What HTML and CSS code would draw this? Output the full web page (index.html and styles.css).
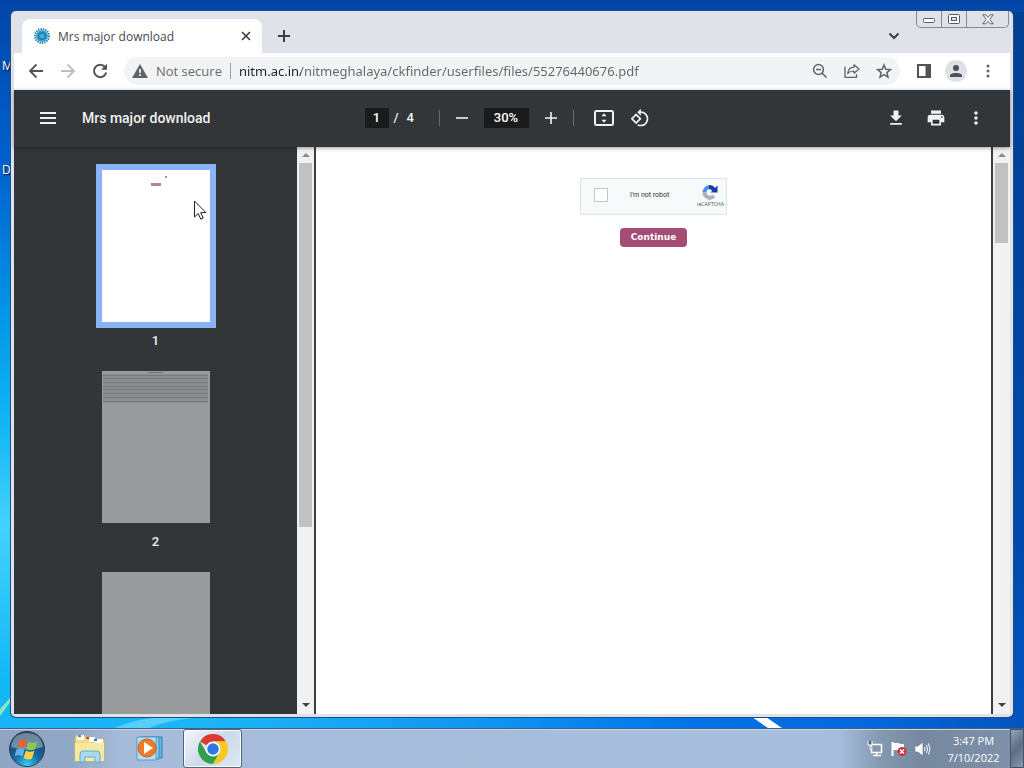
FILE: index.html
```
<!DOCTYPE html>
<html lang="en">
<head>
  <meta charset="UTF-8">
  <title>Mrs major download</title>
  <link rel="stylesheet" href="styles.css">
</head>
<body>

<main class="desktop">
  <svg class="wallpaper" viewBox="0 0 1024 728" preserveAspectRatio="none" aria-hidden="true">
    <path d="M0 709 L11 697 L11 701 L0 716Z" fill="#8be6c0"/>
    <path d="M115 728 Q135 719 160 717 L205 717 Q165 720 150 728Z" fill="#56cffb"/>
    <path d="M752 717 L766 717 L782 728 L768 728Z" fill="#fff"/>
  </svg>
  <span class="shortcut shortcut-m">M</span>
  <span class="shortcut shortcut-d">D</span>

  <div class="window">
    <header class="tabstrip">
      <div class="tab">
        <svg width="18" height="18" viewBox="0 0 18 18">
          <circle cx="9" cy="9" r="7" fill="none" stroke="#2b7fa3" stroke-width="2" stroke-dasharray="1.4 1"/>
          <circle cx="9" cy="9" r="6" fill="#35a3d5"/>
          <circle cx="9" cy="9" r="3.5" fill="#299bd0" stroke="#1c7298"/>
          <path d="M7 9h4M9 7v4" stroke="#5dbbe0"/>
        </svg>
        <span class="tab-title">Mrs major download</span>
        <button class="plain" aria-label="Close tab">
          <svg width="10" height="10" viewBox="0 0 10 10"><path d="M1 1l8 8M9 1l-8 8" stroke="#3c4043" stroke-width="1.7"/></svg>
        </button>
      </div>
      <button class="plain new-tab" aria-label="New tab">
        <svg width="12" height="12" viewBox="0 0 12 12"><path d="M6 0v12M0 6h12" stroke="#3c4043" stroke-width="2"/></svg>
      </button>
      <button class="plain tab-search" aria-label="Search tabs">
        <svg width="12" height="8" viewBox="0 0 12 8"><path d="M1.500 1.500L6 6l4.500-4.500" fill="none" stroke="#3c4043" stroke-width="2"/></svg>
      </button>
      <div class="caption">
        <button class="cap-btn" aria-label="Minimize">
          <svg width="13" height="6" viewBox="0 0 13 6"><rect x=".5" y=".5" width="11" height="4" rx="1" fill="#fff" stroke="#555b66"/></svg>
        </button>
        <button class="cap-btn" aria-label="Maximize">
          <svg width="12" height="10" viewBox="0 0 12 10"><rect x=".5" y=".5" width="11" height="9" rx="1" fill="#fff" stroke="#555b66"/><rect x="3.500" y="3.500" width="5" height="3" fill="#dfe2e9" stroke="#555b66"/></svg>
        </button>
        <button class="cap-btn cap-close" aria-label="Close">
          <svg width="12" height="11" viewBox="0 0 12 11"><path d="M.8.800h3L6 3.400 8.200.800h3L7.700 5.300l3.500 4.500h-3L6 7.200 3.800 9.800h-3l3.500-4.500z" fill="#fff" stroke="#555b66"/></svg>
        </button>
      </div>
    </header>

    <nav class="toolbar">
      <button class="plain nav-btn" aria-label="Back">
        <svg width="16" height="16" viewBox="0 0 16 16"><path d="M15 8H2M8.500 1.500L2 8l6.500 6.500" fill="none" stroke="#505458" stroke-width="1.800"/></svg>
      </button>
      <button class="plain nav-btn" aria-label="Forward">
        <svg width="16" height="16" viewBox="0 0 16 16"><path d="M1 8h13M7.500 1.500L14 8l-6.500 6.500" fill="none" stroke="#bcbec1" stroke-width="1.800"/></svg>
      </button>
      <button class="plain nav-btn" aria-label="Reload">
        <svg width="16" height="16" viewBox="0 0 16 16"><path d="M13 4A6.200 6.200 0 1 0 14.200 9.500" fill="none" stroke="#505458" stroke-width="2"/><path d="M15 .8v6H9z" fill="#505458"/></svg>
      </button>
      <div class="omnibox">
        <svg width="16" height="14" viewBox="0 0 16 14"><path d="M8 0l8 14H0z" fill="#5f6368"/><path d="M8 5v4M8 10.300v1.700" stroke="#f1f3f4" stroke-width="1.800"/></svg>
        <label class="not-secure" for="url">Not secure</label>
        <input id="url" type="text" value="nitm.ac.in/nitmeghalaya/ckfinder/userfiles/files/55276440676.pdf">
        <button class="plain" aria-label="Zoom">
          <svg width="16" height="16" viewBox="0 0 16 16"><circle cx="6.500" cy="6.500" r="4.900" fill="none" stroke="#5f6368" stroke-width="1.500"/><path d="M4 6.500h5M10 10l4.500 4.500" stroke="#5f6368" stroke-width="1.600"/></svg>
        </button>
        <button class="plain" aria-label="Share">
          <svg width="16" height="16" viewBox="0 0 16 16"><path d="M1 3.500v10.800h11.500v-3" fill="none" stroke="#5f6368" stroke-width="1.300"/><path d="M10 1.800l5 4.200-5 4.200V8Q6 7.800 3.600 10.500 4.500 4.500 10 4.200z" fill="none" stroke="#5f6368" stroke-width="1.200" stroke-linejoin="round"/></svg>
        </button>
        <button class="plain" aria-label="Bookmark">
          <svg width="16" height="16" viewBox="0 0 16 16"><path d="M8 2l1.800 4.200 4.600.400-3.500 3 1.100 4.500L8 11.700l-4 2.400 1.100-4.500-3.500-3 4.600-.4z" fill="none" stroke="#5f6368" stroke-width="1.500"/></svg>
        </button>
      </div>
      <button class="plain" aria-label="Side panel">
        <svg width="16" height="16" viewBox="0 0 16 16"><path d="M2 2h12v12H2z" fill="none" stroke="#505458" stroke-width="2"/><path d="M9.500 2H14v12H9.500z" fill="#505458"/></svg>
      </button>
      <button class="plain avatar" aria-label="Profile">
        <svg width="12" height="12" viewBox="0 0 12 12"><circle cx="6" cy="3" r="3" fill="#4a4f59"/><path d="M0 12v-1.500C0 7 12 7 12 10.500V12z" fill="#4a4f59"/></svg>
      </button>
      <button class="plain" aria-label="Menu">
        <svg width="16" height="16" viewBox="0 0 16 16" fill="#5f6368"><circle cx="8" cy="3" r="1.500"/><circle cx="8" cy="8" r="1.500"/><circle cx="8" cy="13" r="1.500"/></svg>
      </button>
    </nav>

    <section class="pdfbar">
      <div class="pdf-left">
        <button class="plain" aria-label="Toggle sidebar">
          <svg width="16" height="12" viewBox="0 0 16 12"><path d="M0 1h16M0 6h16M0 11h16" stroke="#f1f1f1" stroke-width="2"/></svg>
        </button>
        <h1>Mrs major download</h1>
      </div>
      <div class="pdf-center">
        <input class="box page-box" type="text" value="1" aria-label="Page">
        <span class="pages"><span>/</span><span>4</span></span>
        <i class="divider"></i>
        <button class="plain" aria-label="Zoom out">
          <svg width="12" height="12" viewBox="0 0 12 12"><path d="M0 6h12" stroke="#f1f1f1" stroke-width="1.600"/></svg>
        </button>
        <input class="box zoom-box" type="text" value="30%" aria-label="Zoom level">
        <button class="plain" aria-label="Zoom in">
          <svg width="12" height="12" viewBox="0 0 12 12"><path d="M0 6h12M6 0v12" stroke="#f1f1f1" stroke-width="1.600"/></svg>
        </button>
        <i class="divider"></i>
        <button class="plain fit" aria-label="Fit to page">
          <svg width="20" height="16" viewBox="0 0 20 16"><rect x="1" y="1" width="18" height="14" rx="1.500" fill="none" stroke="#f1f1f1" stroke-width="2"/><path d="M10 3.300l2.500 2.900h-5zM10 12.700l2.500-2.900h-5z" fill="#f1f1f1"/></svg>
        </button>
        <button class="plain" aria-label="Rotate">
          <svg width="20" height="20" viewBox="0 0 24 24"><path d="M7.340 6.410L.86 12.900l6.490 6.480 6.490-6.480-6.500-6.490zM3.690 12.900l3.660-3.660L11 12.900l-3.660 3.660-3.650-3.660zm15.670-6.260C17.610 4.880 15.300 4 13 4V.76L8.760 5 13 9.240V6c1.790 0 3.580.68 4.950 2.050 2.730 2.730 2.730 7.170 0 9.900C16.580 19.320 14.790 20 13 20c-.97 0-1.940-.21-2.840-.61l-1.490 1.490C10.020 21.620 11.510 22 13 22c2.300 0 4.610-.88 6.360-2.640 3.520-3.510 3.520-9.210 0-12.720z" fill="#f1f1f1"/></svg>
        </button>
      </div>
      <div class="pdf-right">
        <button class="plain" aria-label="Download">
          <svg width="20" height="20" viewBox="0 0 24 24"><path d="M19 9h-4V3H9v6H5l7 7 7-7zM5 18v2h14v-2H5z" fill="#f1f1f1"/></svg>
        </button>
        <button class="plain" aria-label="Print">
          <svg width="20" height="20" viewBox="0 0 24 24"><path d="M19 8H5c-1.660 0-3 1.340-3 3v6h4v4h12v-4h4v-6c0-1.660-1.340-3-3-3zm-3 11H8v-5h8v5zm3-7c-.55 0-1-.45-1-1s.45-1 1-1 1 .45 1 1-.45 1-1 1zm-1-9H6v4h12V3z" fill="#f1f1f1"/></svg>
        </button>
        <button class="plain" aria-label="More actions">
          <svg width="20" height="20" viewBox="0 0 24 24"><path d="M12 8c1.100 0 2-.9 2-2s-.9-2-2-2-2 .9-2 2 .9 2 2 2zm0 2c-1.100 0-2 .9-2 2s.9 2 2 2 2-.9 2-2-.9-2-2-2zm0 6c-1.100 0-2 .9-2 2s.9 2 2 2 2-.9 2-2-.9-2-2-2z" fill="#f1f1f1"/></svg>
        </button>
      </div>
    </section>

    <div class="viewer">
      <aside class="sidebar">
        <div class="thumb active">
          <div class="sheet">
            <svg width="108" height="30" viewBox="0 0 108 30"><path d="M49 8h12" stroke="#eef1f1"/><path d="M63 7h2" stroke="#999" stroke-width="2"/><rect x="49" y="13" width="10" height="3" fill="#b98099"/></svg>
          </div>
          <span>1</span>
        </div>
        <div class="thumb">
          <div class="sheet">
            <svg width="108" height="34" viewBox="0 0 108 34"><rect x="1" y="3" width="105" height="29" fill="#8b8d8e"/><path d="M46 1.500h15" stroke="#6e7071"/><path d="M1 4.500h105M1 7.500h105M1 11.500h105M1 15.500h105M1 18.500h105M1 22.500h105M1 26.500h105M1 30.500h105" stroke="#77797a"/></svg>
          </div>
          <span>2</span>
        </div>
        <div class="thumb">
          <div class="sheet"></div>
        </div>
      </aside>
      <div class="scrollbar">
        <i class="arrow up"></i>
        <div class="track"><div class="grip" style="height: 68%"></div></div>
        <i class="arrow down"></i>
      </div>
      <article class="page">
        <div class="captcha">
          <input type="checkbox" id="robot">
          <label for="robot">I'm not robot</label>
          <div class="captcha-logo">
            <svg width="18" height="17" viewBox="0 0 18 17">
              <path d="M3.500 8.500A5.500 5.500 0 0 1 9 3" fill="none" stroke="#4a90e8" stroke-width="4"/>
              <path d="M8 3a6 6 0 0 1 5 3" fill="none" stroke="#1c3aa9" stroke-width="4"/>
              <path d="M16.500 1.500v7h-7z" fill="#1c3aa9"/>
              <path d="M3.500 8.500a5.500 5.500 0 0 0 9.500 3.500" fill="none" stroke="#aeb2b8" stroke-width="4"/>
            </svg>
            <small>reCAPTCHA</small>
          </div>
        </div>
        <button class="continue">Continue</button>
      </article>
      <div class="scrollbar">
        <i class="arrow up"></i>
        <div class="track"><div class="grip" style="height: 15%"></div></div>
        <i class="arrow down"></i>
      </div>
    </div>
  </div>

  <svg class="pointer" width="14" height="21" viewBox="0 0 14 21" aria-hidden="true"><path d="M.5 1v16l3.700-3.500 2.600 5.700 2.400-1.100-2.500-5.500h5.200z" fill="#fff" stroke="#222"/></svg>
</main>

<footer class="taskbar">
  <button class="plain start" aria-label="Start">
    <svg width="38" height="38" viewBox="0 0 38 38">
      <defs>
        <radialGradient id="orb" cx=".5" cy=".95" r=".9"><stop offset="0" stop-color="#35d0f5"/><stop offset=".45" stop-color="#14649a"/><stop offset="1" stop-color="#24425f"/></radialGradient>
      </defs>
      <circle cx="19" cy="19" r="17.500" fill="url(#orb)" stroke="#2d4560"/>
      <path d="M3 17Q5 3 19 3t16 14Q19 22 3 17z" fill="#fff" opacity=".35"/>
      <path d="M11 11q4-3 8 0l-2 7q-4-3-8 0z" fill="#ea6234"/>
      <path d="M20.500 11.500q4 3 9 0l-2.500 7.500q-4 2.500-8.500 0z" fill="#91c84b"/>
      <path d="M8.500 19.500q4-3 8 0l-2 7q-4-3-8 0z" fill="#62b2e8"/>
      <path d="M18 20.500q4.500 2.500 8.500 0l-2.500 8q-4 2-8.500-.5z" fill="#fdcf42"/>
    </svg>
  </button>
  <button class="plain task" aria-label="Windows Explorer">
    <svg width="34" height="30" viewBox="0 0 34 30">
      <path d="M2 3q0-1 1-1h10l2 3h16v22H2z" fill="#f1dc86" stroke="#cdb35a"/>
      <path d="M4 1h7v5H4zM16 3h6v5h-6zM22 5h8v4h-8z" fill="#fff"/>
      <path d="M5 1h3v2H5z" fill="#3ea84a"/><path d="M13 3h3v2h-3z" fill="#d8432f"/><path d="M21 5h3v2h-3z" fill="#3975cc"/>
      <path d="M2 9h29v18H2z" fill="#f8e9a2"/>
      <path d="M7 28v-8q0-3 3-3h14q3 0 3 3v8h-5v-5H12v5z" fill="#a8d9f0" stroke="#5daed2"/>
    </svg>
  </button>
  <button class="plain task" aria-label="Windows Media Player">
    <svg width="28" height="26" viewBox="0 0 28 26">
      <path d="M7 1h19v21H7z" fill="#6ab4e0" stroke="#347eb0"/><path d="M4 1h19v22H4z" fill="#8ccaec" stroke="#3d8cbc"/><path d="M1 1h19v23H1z" fill="#b5dcf2" stroke="#559ec8"/>
      <circle cx="11" cy="12" r="9" fill="#ed7b28" stroke="#c85f1a"/><path d="M8 6l9 6-9 6z" fill="#fff"/>
    </svg>
  </button>
  <button class="plain task task-open" aria-label="Google Chrome">
    <svg width="30" height="30" viewBox="0 0 30 30">
      <path d="M15 15L2 7.500A15 15 0 0 1 28 7.500H15z" fill="#dc3b2f"/>
      <path d="M15 15l6.500 3.750L15 30A15 15 0 0 1 2 7.500l6.500 11.250z" fill="#2fa04d"/>
      <path d="M15 7.500h13A15 15 0 0 1 15 30l6.500-11.250z" fill="#fbc926"/>
      <circle cx="15" cy="15" r="7.500" fill="#fff"/><circle cx="15" cy="15" r="5.800" fill="#2f78e4"/>
    </svg>
  </button>
  <div class="tray">
    <svg width="16" height="16" viewBox="0 0 16 16"><path d="M4.500 3.500h10v8h-10z" fill="#8797ab" stroke="#fff" stroke-width="1.500"/><path d="M6 14.500h8M9.500 12v2" stroke="#fff" stroke-width="1.500"/><path d="M1 0v4h4V0M3 4v4h2" fill="#56687e" stroke="#fff"/></svg>
    <svg width="16" height="16" viewBox="0 0 16 16"><path d="M1.500 1v14" stroke="#fff" stroke-width="2"/><path d="M2 2h6l1 1h4v6H2z" fill="#fff"/><circle cx="11" cy="10.500" r="4.500" fill="#d22f3a"/><path d="M9 8.500l4 4M13 8.500l-4 4" stroke="#fff" stroke-width="1.500"/></svg>
    <svg width="16" height="16" viewBox="0 0 16 16"><path d="M0 5h3l5-4v14l-5-4H0z" fill="#fff" stroke="#62748a" stroke-width=".6"/><path d="M9.500 6q1 2 0 4M11.500 4q2 4 0 8M13.500 2.500q3 5.500 0 11" fill="none" stroke="#fff"/></svg>
  </div>
  <time class="clock">3:47 PM<br>7/10/2022</time>
  <button class="plain show-desktop" aria-label="Show desktop"></button>
</footer>

</body>
</html>
```
FILE: styles.css
```
* {
  box-sizing: border-box;
}
body {
  margin: 0;
  height: 100vh;
  display: flex;
  flex-direction: column;
  overflow: hidden;
  font-family: "Open Sans", "Noto Sans", sans-serif;
  font-size: 12px;
}
svg {
  display: block;
  flex: none;
}
.plain {
  display: flex;
  align-items: center;
  justify-content: center;
  padding: 0;
  border: none;
  background: none;
}

/* desktop */
.desktop {
  position: relative;
  flex: 1;
  min-height: 0;
  display: flex;
  padding: 11px;
  background:
    linear-gradient(to bottom, #0344a4, #0348ac) top / 100% 12px no-repeat,
    linear-gradient(to right, #18b4f5, #1cb6f8 20%, #1298f2 45%, #0074e8 68%, #0468dc 85%, #0354bc) bottom / 100% 12px no-repeat,
    linear-gradient(to bottom, #0346a8, #0062cf 23%, #049ae9 45%, #12b5f5 58%, #43d2fb 72%, #12b7f5 94%) left / 12px 100% no-repeat,
    linear-gradient(to bottom, #02408f, #00429c 30%, #0048aa 70%, #0355c0) right / 12px 100% no-repeat;
}
.wallpaper {
  position: absolute;
  inset: 0;
  width: 100%;
  height: 100%;
}
.shortcut {
  position: absolute;
  left: 2px;
  color: #fff;
  line-height: 16px;
  text-shadow: 1px 1px 2px #000;
}
.shortcut-m {
  top: 58px;
}
.shortcut-d {
  top: 162px;
}
.pointer {
  position: absolute;
  left: 194px;
  top: 200px;
}

/* browser window */
.window {
  position: relative;
  flex: 1;
  min-width: 0;
  display: flex;
  flex-direction: column;
  padding: 0 3px 3px;
  background: #dfe2e9;
  border-radius: 5px;
  box-shadow: 0 0 0 1px #1d4f85;
}
.tabstrip {
  height: 42px;
  display: flex;
  align-items: flex-end;
}
.tab {
  width: 240px;
  height: 34px;
  margin-left: 8px;
  padding: 0 11px;
  display: flex;
  align-items: center;
  gap: 7px;
  background: #fff;
  border-radius: 8px 8px 0 0;
}
.tab-title {
  flex: 1;
  color: #45494d;
}
.new-tab {
  width: 28px;
  height: 34px;
  margin-left: 8px;
}
.tab-search {
  width: 28px;
  height: 34px;
  margin-left: auto;
}
.caption {
  align-self: flex-start;
  display: flex;
  height: 17px;
  margin: 0 1px 0 8px;
  border: 1px solid #858a94;
  border-top: none;
  border-radius: 0 0 5px 5px;
}
.cap-btn {
  width: 25px;
  display: flex;
  align-items: center;
  justify-content: center;
  padding: 0;
  border: none;
  border-right: 1px solid #858a94;
  background: none;
}
.cap-btn:first-child svg {
  margin-top: 4px;
}
.cap-close {
  width: 41px;
  border-right: none;
}
.toolbar {
  height: 37px;
  display: flex;
  align-items: center;
  gap: 16px;
  padding: 0 14px 2px;
  background: #fff;
}
.omnibox {
  flex: 1;
  height: 28px;
  display: flex;
  align-items: center;
  gap: 16px;
  padding: 0 8px;
  background: #f1f3f4;
  border-radius: 14px;
}
.not-secure {
  margin-left: -8px;
  padding-right: 8px;
  border-right: 1px solid #9a9da1;
  color: #686c70;
  font-size: 13px;
  line-height: 16px;
}
.omnibox input {
  flex: 1;
  min-width: 0;
  margin-left: -8px;
  padding: 0;
  border: none;
  /* the host is darker than the path */
  background: linear-gradient(to right, #202124 62px, #63676b 62px);
  -webkit-background-clip: text;
  background-clip: text;
  -webkit-text-fill-color: transparent;
  font: 13px/20px "Noto Sans", "Open Sans", sans-serif;
}
.avatar {
  width: 22px;
  height: 22px;
  margin: 0 -3px;
  border-radius: 50%;
  background: #dee1e6;
}

/* pdf viewer */
.pdfbar {
  position: relative;
  height: 57px;
  display: grid;
  grid-template-columns: 1fr auto 1fr;
  align-items: center;
  padding: 0 24px 2px 26px;
  background: #323639;
  box-shadow: 0 1px 4px rgba(0, 0, 0, 0.4);
  color: #f1f1f1;
  font-family: Roboto, sans-serif;
}
.pdf-left,
.pdf-center,
.pdf-right {
  display: flex;
  align-items: center;
}
.pdf-left {
  gap: 26px;
}
.pdf-center {
  padding-right: 12px;
}
.pdf-right {
  justify-content: flex-end;
  gap: 20px;
}
h1 {
  margin: 0;
  font-size: 14px;
  font-weight: 500;
}
.box {
  height: 20px;
  padding: 0;
  border: none;
  background: #191b1c;
  color: #fff;
  font: 500 13px/20px Roboto, sans-serif;
  text-align: center;
}
.page-box {
  width: 24px;
}
.zoom-box {
  width: 45px;
  margin: 0 16px;
}
.pages {
  display: flex;
  gap: 8px;
  width: 50px;
  padding-left: 5px;
  font-size: 13px;
  font-weight: 500;
}
.divider {
  width: 1px;
  height: 16px;
  background: #686b6e;
}
.divider + .plain {
  margin-left: 16px;
}
.zoom-box + .plain {
  margin-right: 16px;
}
.divider + .fit {
  margin: 0 16px 0 20px;
}
.viewer {
  flex: 1;
  min-height: 0;
  display: flex;
}
.sidebar {
  width: 283px;
  padding-top: 17px;
  overflow: hidden;
  background: #323639;
}
.thumb {
  display: flex;
  flex-direction: column;
  align-items: center;
  margin-bottom: 12px;
  color: #f1f1f1;
  font: 500 13px/25px Roboto, sans-serif;
}
.sheet {
  width: 120px;
  height: 164px;
  border: 6px solid transparent;
  background: #999b9c padding-box;
}
.active .sheet {
  border-color: #8ab4f8;
  background: #fff;
}
.scrollbar {
  width: 17px;
  display: flex;
  flex-direction: column;
  background: #f1f1f1;
}
.track {
  flex: 1;
  padding: 0 2px;
}
.grip {
  background: #c1c1c1;
}
.arrow {
  height: 16px;
  display: flex;
  align-items: center;
  justify-content: center;
}
.arrow::before {
  content: "";
  border: 4px solid transparent;
}
.up::before {
  margin-bottom: 4px;
  border-bottom-color: #8a8a8a;
}
.down::before {
  margin-top: 2px;
  border-top-color: #444;
}
.page {
  flex: 1;
  display: flex;
  flex-direction: column;
  align-items: center;
  gap: 13px;
  padding-top: 31px;
  border: solid #3c3f42;
  border-width: 0 2px;
  background: #fff;
}
.captcha {
  width: 147px;
  height: 37px;
  display: flex;
  align-items: center;
  padding: 0 2px 3px 13px;
  border: 1px solid #dfe4e4;
  background: #f7fafa;
  font-family: Roboto, sans-serif;
}
.captcha input {
  appearance: none;
  width: 14px;
  height: 14px;
  margin: 0;
  border: 1px solid #bccaca;
  background: #fff;
}
.captcha label {
  margin: 0 auto 0 22px;
  color: #333;
  font-size: 7px;
}
.captcha-logo {
  display: flex;
  flex-direction: column;
  align-items: center;
}
.captcha small {
  color: #666;
  font-size: 5px;
  line-height: 6px;
}
.continue {
  height: 19px;
  padding: 0 11px;
  border: none;
  border-radius: 4px;
  background: #a34d75;
  color: #fff;
  font: bold 9px/19px "DejaVu Sans", sans-serif;
}

/* taskbar */
.taskbar {
  height: 40px;
  display: flex;
  align-items: center;
  padding-left: 8px;
  border-top: 1px solid #3c6288;
  background: linear-gradient(to right, #8fa5c3, #91a7c6 7%, #a6bcda 12%, #a7bfdc 80%, #a5bddb 82%, #8498b1 86%, #76889f 90%, #7f92ab);
  box-shadow: inset 0 1px #c6d6e9;
}
.start {
  margin-right: 14px;
}
.task {
  width: 60px;
  height: 39px;
}
.task-open {
  width: 59px;
  margin-left: 3px;
  border: 1px solid #51657c;
  border-radius: 3px;
  background: linear-gradient(135deg, #f3f7fb, #cddaea 50%, #dfe8f2);
  box-shadow: inset 0 0 0 1px #fff;
}
.tray {
  margin-left: auto;
  display: flex;
  gap: 8px;
}
.clock {
  width: 69px;
  margin: 0 2px 0 8px;
  color: #fff;
  font-size: 11px;
  line-height: 17px;
  text-align: center;
}
.show-desktop {
  width: 14px;
  height: 39px;
  border: 1px solid #44546a;
  background: linear-gradient(135deg, #95a4b5, #5d6e83 50%, #8796a9);
}
```
